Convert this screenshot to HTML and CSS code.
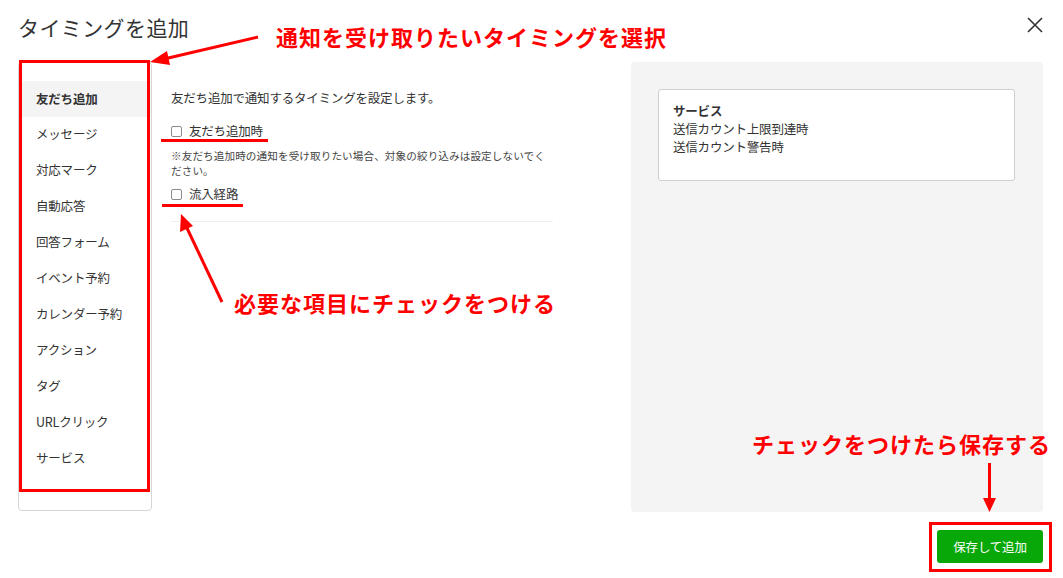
FILE: index.html
```html
<!DOCTYPE html>
<html lang="ja">
<head>
<meta charset="utf-8">
<title>タイミングを追加</title>
<link rel="stylesheet" href="styles.css">
</head>
<body>
<div class="modal">
  <header class="head">
    <h1 class="title">タイミングを追加</h1>
    <button class="close" aria-label="閉じる">
      <svg width="16" height="16" viewBox="0 0 16 16"><path d="M1 1 L15 15 M15 1 L1 15" stroke="#333" stroke-width="1.6" fill="none"/></svg>
    </button>
  </header>
  <div class="content">
    <nav class="side">
      <ul class="menu">
        <li class="item active">友だち追加</li>
        <li class="item">メッセージ</li>
        <li class="item">対応マーク</li>
        <li class="item">自動応答</li>
        <li class="item">回答フォーム</li>
        <li class="item">イベント予約</li>
        <li class="item">カレンダー予約</li>
        <li class="item">アクション</li>
        <li class="item">タグ</li>
        <li class="item">URLクリック</li>
        <li class="item">サービス</li>
      </ul>
    </nav>
    <section class="main">
      <p class="intro">友だち追加で通知するタイミングを設定します。</p>
      <label class="check first"><span class="box"></span>友だち追加時</label>
      <p class="note">※友だち追加時の通知を受け取りたい場合、対象の絞り込みは設定しないでください。</p>
      <label class="check"><span class="box"></span>流入経路</label>
      <div class="divider"></div>
    </section>
    <aside class="preview">
      <div class="card">
        <div class="card-title">サービス</div>
        <div>送信カウント上限到達時</div>
        <div>送信カウント警告時</div>
      </div>
    </aside>
  </div>
  <footer class="foot">
    <button class="save">保存して追加</button>
  </footer>
</div>

<div class="annot">
  <div class="note-text n1">通知を受け取りたいタイミングを選択</div>
  <div class="note-text n2">必要な項目にチェックをつける</div>
  <div class="note-text n3">チェックをつけたら保存する</div>
  <div class="frame f1"></div>
  <div class="frame f2"></div>
  <div class="uline u1"></div>
  <div class="uline u2"></div>
  <svg class="arrows" width="1063" height="578" viewBox="0 0 1063 578">
    <line x1="258" y1="37" x2="164" y2="59" stroke="#f00" stroke-width="3"/>
    <polygon points="150,62 167,51 170,65" fill="#f00"/>
    <line x1="222" y1="302" x2="186" y2="226" stroke="#f00" stroke-width="3"/>
    <polygon points="181,214 180,232 193,226" fill="#f00"/>
    <line x1="989.5" y1="463" x2="989.5" y2="500" stroke="#f00" stroke-width="3"/>
    <polygon points="989.5,512 983,498 996,498" fill="#f00"/>
  </svg>
</div>
</body>
</html>
```

FILE: styles.css
```css
* { box-sizing: border-box; }
html, body { margin: 0; padding: 0; }
body {
  width: 1063px;
  height: 578px;
  background: #fff;
  font-family: "Noto Sans CJK JP", "Noto Sans", sans-serif;
  color: #333;
  position: relative;
  overflow: hidden;
}
.modal { display: flex; flex-direction: column; }
.head {
  height: 62px;
  display: flex;
  justify-content: space-between;
  align-items: flex-start;
  padding: 14px 20px 0 18px;
}
.title {
  margin: 0;
  font-size: 21px;
  line-height: 26px;
  font-weight: 400;
  color: #333;
  letter-spacing: 0.4px;
}
.close {
  border: 0;
  background: none;
  padding: 0;
  margin-top: 3px;
  width: 16px;
  height: 16px;
  cursor: pointer;
}
.close svg { display: block; }
.content { display: flex; height: 450px; }
.side {
  width: 134px;
  margin-left: 18px;
  height: 449px;
  border: 1px solid #d6d6d6;
  border-radius: 4px;
  padding: 18px 0 0;
}
.menu { list-style: none; margin: 0; padding: 0; }
.item {
  height: 36px;
  line-height: 33px;
  padding-left: 17px;
  font-size: 12.5px;
  letter-spacing: -0.2px;
  color: #333;
}
.item.active { background: #f4f4f4; font-weight: 700; line-height: 35px; }
.main {
  width: 420px;
  padding: 27px 19px 0;
}
.intro { margin: 0; font-size: 12.5px; line-height: 18px; letter-spacing: -0.2px; }
.check {
  display: flex;
  align-items: center;
  font-size: 12.5px;
  line-height: 18px;
  letter-spacing: -0.2px;
  margin-top: 7px;
}
.check.first { margin-top: 15px; }
.box {
  width: 11px;
  height: 11px;
  border: 1px solid #8a8a8a;
  border-radius: 2px;
  margin-right: 7px;
  background: #fff;
}
.note {
  margin: 8px 0 0;
  font-size: 10.6px;
  line-height: 15px;
  letter-spacing: 0.1px;
  color: #444;
}
.divider { margin-top: 18px; border-top: 1px solid #eee; }
.preview {
  margin-left: auto;
  margin-right: 20px;
  width: 412px;
  background: #f4f4f4;
  border-radius: 4px;
  padding: 27px 28px 0 27px;
}
.card {
  background: #fff;
  border: 1px solid #cfcfcf;
  border-radius: 3px;
  padding: 12px 14px 24px;
  font-size: 12.5px;
  line-height: 18px;
  letter-spacing: -0.2px;
}
.card-title { font-weight: 700; }
.foot {
  display: flex;
  justify-content: flex-end;
  padding: 18px 20px 0 0;
}
.save {
  width: 106px;
  height: 33px;
  border: 0;
  border-radius: 3px;
  background: #07a807;
  color: #fff;
  font-family: inherit;
  font-size: 12.5px;
  letter-spacing: -0.2px;
}

/* annotations overlay */
.annot { position: absolute; inset: 0; pointer-events: none; }
.note-text {
  position: absolute;
  color: #f00;
  font-weight: 700;
  font-size: 22px;
  line-height: 24px;
  letter-spacing: 1px;
  white-space: nowrap;
}
.n1 { left: 276px; top: 24px; }
.n2 { left: 234px; top: 290px; }
.n3 { left: 752px; top: 431px; }
.frame { position: absolute; border: 3.5px solid #f00; }
.f1 { left: 19px; top: 60px; width: 131px; height: 432px; }
.f2 { left: 929px; top: 522px; width: 123px; height: 50px; }
.uline { position: absolute; height: 3px; background: #f00; }
.u1 { left: 161px; top: 139px; width: 107px; }
.u2 { left: 162px; top: 204px; width: 81px; }
.arrows { position: absolute; left: 0; top: 0; }
```
